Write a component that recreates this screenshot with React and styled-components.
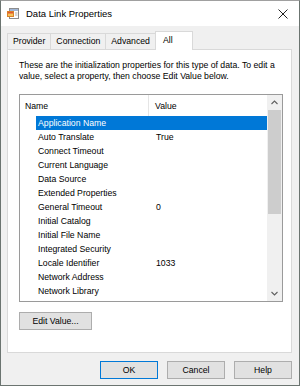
import React from 'react'
import styled, { createGlobalStyle } from 'styled-components'

const GlobalStyle = createGlobalStyle`
  html, body {
    margin: 0;
    padding: 0;
    background: #f0f0f0;
  }
  body {
    font-family: "Liberation Sans", Arial, sans-serif;
    color: #000;
  }
`

const rows = [
  { name: 'Application Name', value: '', selected: true },
  { name: 'Auto Translate', value: 'True' },
  { name: 'Connect Timeout', value: '' },
  { name: 'Current Language', value: '' },
  { name: 'Data Source', value: '' },
  { name: 'Extended Properties', value: '' },
  { name: 'General Timeout', value: '0' },
  { name: 'Initial Catalog', value: '' },
  { name: 'Initial File Name', value: '' },
  { name: 'Integrated Security', value: '' },
  { name: 'Locale Identifier', value: '1033' },
  { name: 'Network Address', value: '' },
  { name: 'Network Library', value: '' },
]

const tabs = ['Provider', 'Connection', 'Advanced', 'All']

const DataLinkIcon = () => (
  <svg width="13" height="13" viewBox="0 0 13 13">
    <rect x="2.5" y="1.5" width="9" height="10" fill="#fff" stroke="#8c8c8c" />
    <rect x="3" y="2" width="8" height="2" fill="#9fb6d6" />
    <rect x="0.5" y="4.5" width="6" height="5" fill="#f6c35a" stroke="#d9822b" />
    <rect x="1" y="5" width="5" height="1.5" fill="#e2562f" />
    <line x1="8" y1="6" x2="10.5" y2="6" stroke="#b0b0b0" />
    <line x1="8" y1="8" x2="10.5" y2="8" stroke="#b0b0b0" />
  </svg>
)

const CloseIcon = () => (
  <svg width="10" height="10" viewBox="0 0 10 10">
    <path d="M0.5 0.5 L9.5 9.5 M9.5 0.5 L0.5 9.5" stroke="#222" strokeWidth="1" fill="none" />
  </svg>
)

const Chevron = ({ down }) => (
  <svg width="7" height="5" viewBox="0 0 7 5">
    <path
      d={down ? 'M0.5 1 L3.5 4 L6.5 1' : 'M0.5 4 L3.5 1 L6.5 4'}
      stroke="#606060"
      strokeWidth="1.1"
      fill="none"
    />
  </svg>
)

const App = () => {
  return (
    <>
      <GlobalStyle />
      <Window>
        <TitleBar>
          <DataLinkIcon />
          <Title>Data Link Properties</Title>
          <CloseButton>
            <CloseIcon />
          </CloseButton>
        </TitleBar>
        <Body>
          <TabStrip>
            {tabs.map((t) => (
              <Tab key={t} $active={t === 'All'}>
                {t}
              </Tab>
            ))}
          </TabStrip>
          <Panel>
            <Description>
              These are the initialization properties for this type of data. To edit a
              <br />
              value, select a property, then choose Edit Value below.
            </Description>
            <ListBox>
              <ListMain>
                <Header>
                  <HeaderCell $divider>Name</HeaderCell>
                  <HeaderCell>Value</HeaderCell>
                </Header>
                {rows.map((r) => (
                  <Row key={r.name} $selected={r.selected}>
                    <NameCell>{r.name}</NameCell>
                    <ValueCell>{r.value}</ValueCell>
                  </Row>
                ))}
              </ListMain>
              <ScrollBar>
                <ScrollArrow>
                  <Chevron />
                </ScrollArrow>
                <Thumb />
                <ScrollArrow $bottom>
                  <Chevron down />
                </ScrollArrow>
              </ScrollBar>
            </ListBox>
            <Button $width={73} $gap={10}>Edit Value...</Button>
          </Panel>
          <Footer>
            <Button $width={58} $default>OK</Button>
            <Button $width={58}>Cancel</Button>
            <Button $width={58}>Help</Button>
          </Footer>
        </Body>
      </Window>
    </>
  )
}

const Window = styled.div`
  width: 300px;
  height: 386px;
  box-sizing: border-box;
  border: 1px solid #6b7470;
  border-top-color: #a0a0a0;
  background: #f0f0f0;
  display: flex;
  flex-direction: column;
  overflow: hidden;
`

const TitleBar = styled.div`
  height: 25px;
  flex: none;
  background: #fff;
  display: flex;
  align-items: center;
  gap: 6px;
  padding-left: 6px;
`

const Title = styled.div`
  font-size: 9.5px;
  color: #000;
`

const CloseButton = styled.div`
  margin-left: auto;
  width: 33px;
  height: 25px;
  display: flex;
  align-items: center;
  justify-content: center;
`

const Body = styled.div`
  flex: 1;
  display: flex;
  flex-direction: column;
  padding: 5px 7px 0 6px;
`

const TabStrip = styled.div`
  height: 18px;
  flex: none;
  display: flex;
  align-items: flex-end;
  padding-left: 1px;
`

const Tab = styled.div`
  box-sizing: border-box;
  height: ${(p) => (p.$active ? '19px' : '16px')};
  margin-bottom: ${(p) => (p.$active ? '-1px' : '0')};
  margin-left: -1px;
  min-width: ${(p) => (p.$active ? '38px' : '0')};
  padding: ${(p) => (p.$active ? '0 5px 0 7px' : '0 5px')};
  border: 1px solid #d9d9d9;
  border-bottom: none;
  background: ${(p) => (p.$active ? '#fff' : '#f0f0f0')};
  position: relative;
  z-index: ${(p) => (p.$active ? 1 : 0)};
  font-size: 8.7px;
  line-height: ${(p) => (p.$active ? '17px' : '15px')};
  white-space: nowrap;
`

const Panel = styled.div`
  height: 304px;
  box-sizing: border-box;
  flex: none;
  background: #fff;
  border: 1px solid #d9d9d9;
  padding: 10px 8px 0 11px;
  display: flex;
  flex-direction: column;
  align-items: flex-start;
`

const Description = styled.div`
  font-size: 8.7px;
  line-height: 11px;
  white-space: nowrap;
`

const ListBox = styled.div`
  margin-top: 12px;
  width: 264px;
  height: 208px;
  box-sizing: border-box;
  border: 1px solid #9a9a9a;
  display: flex;
  overflow: hidden;
  background: #fff;
`

const ListMain = styled.div`
  flex: 1;
  display: flex;
  flex-direction: column;
`

const Header = styled.div`
  height: 21px;
  flex: none;
  display: grid;
  grid-template-columns: 129px 1fr;
  align-items: stretch;
`

const HeaderCell = styled.div`
  display: flex;
  align-items: center;
  padding-left: ${(p) => (p.$divider ? '5px' : '6px')};
  font-size: 8.7px;
  border-right: ${(p) => (p.$divider ? '1px solid #e5e5e5' : 'none')};
`

const Row = styled.div`
  height: 14px;
  flex: none;
  margin-left: 16px;
  display: grid;
  grid-template-columns: 113px 1fr;
  font-size: 8.7px;
  line-height: 14px;
  background: ${(p) => (p.$selected ? '#0078d7' : 'transparent')};
  color: ${(p) => (p.$selected ? '#fff' : '#000')};
`

const NameCell = styled.div`
  padding-left: 2px;
  white-space: nowrap;
`

const ValueCell = styled.div`
  padding-left: 7px;
  white-space: nowrap;
`

const ScrollBar = styled.div`
  width: 15px;
  flex: none;
  background: #f0f0f0;
  display: flex;
  flex-direction: column;
`

const ScrollArrow = styled.div`
  height: 15px;
  flex: none;
  display: flex;
  align-items: center;
  justify-content: center;
  margin-top: ${(p) => (p.$bottom ? 'auto' : '0')};
`

const Thumb = styled.div`
  height: 104px;
  margin: 0 1px;
  background: #cdcdcd;
`

const Button = styled.div`
  width: ${(p) => p.$width}px;
  height: 18px;
  box-sizing: border-box;
  margin-top: ${(p) => p.$gap || 0}px;
  background: #e1e1e1;
  border: 1px solid ${(p) => (p.$default ? '#0078d7' : '#adadad')};
  display: flex;
  align-items: center;
  justify-content: center;
  font-size: 8.7px;
`

const Footer = styled.div`
  flex: 1;
  display: flex;
  justify-content: flex-end;
  align-items: flex-start;
  gap: 9px;
  padding-top: 8px;
`

export default App
